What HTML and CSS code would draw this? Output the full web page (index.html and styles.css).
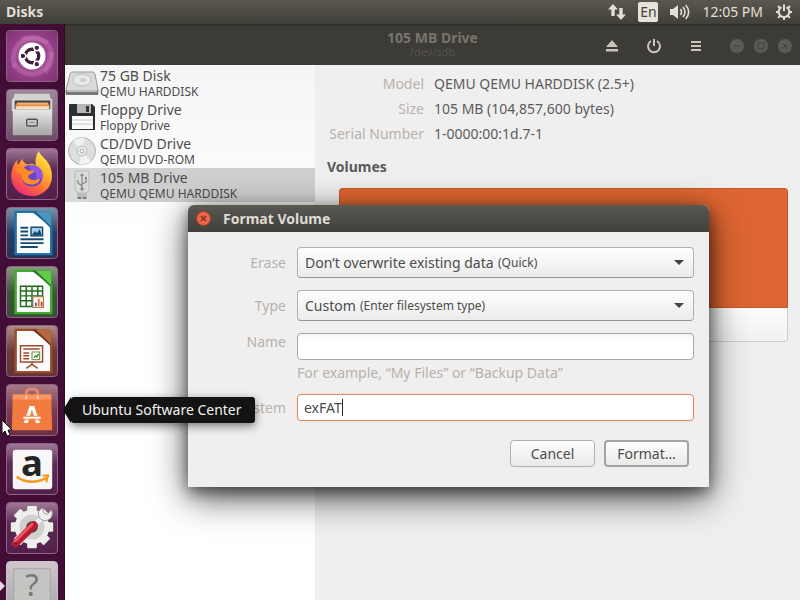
FILE: index.html
```html
<!DOCTYPE html>
<html lang="en">
<head>
<meta charset="utf-8">
<title>Disks</title>
<link rel="stylesheet" href="styles.css">
</head>
<body>
<header class="panel">
  <span class="panel-title">Disks</span>
  <div class="indicators">
    <svg width="18" height="16" viewBox="0 0 18 16" fill="#e4dfd6"><path d="M5 0 0 5.500h3.300V12h3.400V5.500H10zM13 16l-5-5.500h3.300V4h3.400v6.500H18z"/></svg>
    <span class="keyboard">En</span>
    <svg width="20" height="16" viewBox="0 0 20 16" fill="none" stroke="#e4dfd6" stroke-width="1.600"><path d="M0 5h3l5-4v14l-5-4H0z" fill="#e4dfd6" stroke="none"/><path d="M10.500 5q2 3 0 6M13 3q4 5 0 10M15.700 1q6 7 0 14"/></svg>
    <span class="clock">12:05 PM</span>
    <svg width="18" height="18" viewBox="-9 -9 18 18" fill="none" stroke="#e4dfd6" stroke-width="2"><path d="M-2.500-4.800A5.300 5.300 0 1 0 2.500-4.800M0-7.500V-1"/><path d="M5 0h3M-5 0h-3M0 5v3M3.700 3.700l2.200 2.200M-3.700 3.700l-2.200 2.200M4-4l2-2M-4-4l-2-2"/></svg>
  </div>
</header>

<div class="desktop">
  <nav class="launcher" aria-label="Launcher">
    <button class="tile tile-dash" aria-label="Search your computer">
      <svg viewBox="0 0 52 52"><g fill="none" stroke="#d58bc5" stroke-opacity=".3" stroke-width="5"><path d="M8 38C0 12 25 0 42 13"/><path d="M15 9C43-2 56 28 39 43"/><path d="M46 22C45 48 18 52 7 34"/></g><circle cx="26" cy="26" r="14" fill="#fff"/><circle cx="26" cy="26" r="7" fill="none" stroke="#42203d" stroke-width="3.500"/><g stroke="#fff" stroke-width="1.500"><path d="M26 26H13M26 26l7-12M26 26l7 12"/><g fill="#42203d"><circle cx="16.500" cy="26" r="3"/><circle cx="31" cy="17.500" r="3"/><circle cx="31" cy="34.500" r="3"/></g></g><circle cx="26" cy="26" r="5" fill="#fff"/></svg>
    </button>
    <button class="tile tile-files" aria-label="Files">
      <svg viewBox="0 0 52 52"><defs><linearGradient id="cab" x2="0" y2="1"><stop stop-color="#e8e8e6"/><stop offset="1" stop-color="#a6a6a4"/></linearGradient></defs><path d="M8 4h36l2 7H6z" fill="#d2d2d0"/><rect x="5" y="9" width="42" height="13" rx="1" fill="#d8d8d6"/><path d="M8 11h37v10H8z" fill="#44403c"/><path d="M10 13h33v3H10z" fill="#f0b27b"/><path d="M9 15h35v3H9z" fill="#e88c4e"/><path d="M9 17h35v3H9z" fill="#f6dcc0"/><rect x="6" y="20" width="41" height="27" rx="1" fill="url(#cab)"/><rect x="20.500" y="30.500" width="11" height="7" rx="1" fill="#c9c9c7" stroke="#555" stroke-width="1.500"/><path d="M23 34h6" stroke="#888"/></svg>
    </button>
    <button class="tile tile-firefox" aria-label="Firefox">
      <svg viewBox="0 0 52 52"><defs><linearGradient id="fx" x1=".85" y1="0" x2=".2" y2="1"><stop stop-color="#fff04b"/><stop offset=".35" stop-color="#ffb52c"/><stop offset=".65" stop-color="#ff6a3a"/><stop offset="1" stop-color="#e9267a"/></linearGradient></defs><path d="M33 2c1 5 11 9 13 20C50 38 38 49 26 49 11 49 2 37 5 23c1-5 3-9 6-12-1 4 0 5 1 5l4-6c0 3 2 5 5 6 4-1 6-1 9 1-1-5 0-10 3-15z" fill="url(#fx)"/><path d="M17 20c5-6 18-4 20 6 1 8-4 13-11 13-8 0-13-7-9-13z" fill="#6b45c8"/><path d="M22 18c8-4 16 3 15 10-1 3-4 5-7 4 2-4 0-8-4-9z" fill="#9059e0"/><path d="M9 21c3-3 10-2 12 1l7 1c0 3-6 3-6 6 2 4 9 4 11 2 2 0 1 3-1 4-8 5-18 0-17-9-2-2-4-1-6-5z" fill="#ff8b26"/></svg>
    </button>
    <button class="tile tile-writer" aria-label="LibreOffice Writer">
      <svg viewBox="0 0 52 52"><path d="M9 4h21l16 16v28H9z" fill="#fdfdfd" stroke="#2173ab" stroke-width="2.500"/><path d="M26 4h18c2 0 2 1 2 3v13z" fill="#1d608f"/><path d="M30 4h14c2 0 2 1 2 3v12z" fill="#4b94be"/><path d="M14 20.500h8M14 24.500h8M14 28.500h8M14 32.500h24M14 36.500h24M14 40.500h18" stroke="#164b73" stroke-width="2"/><rect x="25" y="20" width="12" height="9" fill="#a5d1e6" stroke="#164b73" stroke-width="1.500"/><path d="m26 28 3-4 2 2 3-4 2 6z" fill="#164b73"/></svg>
    </button>
    <button class="tile tile-calc" aria-label="LibreOffice Calc">
      <svg viewBox="0 0 52 52"><path d="M9 4h21l16 16v28H9z" fill="#fdfdfd" stroke="#3fae2a" stroke-width="2.500"/><path d="M26 4h18c2 0 2 1 2 3v13z" fill="#267326"/><path d="M30 4h14c2 0 2 1 2 3v12z" fill="#62cc49"/><path d="M14 20h23v21H14zM14 25h23M14 30h23M14 35h23M20 20v21M26 20v21M32 20v21" fill="none" stroke="#226b1e" stroke-width="1.500"/><rect x="27" y="31" width="11" height="11" fill="#fff" stroke="#b76a40"/><path d="M29 37h2v4h-2z" fill="#3673b8"/><path d="M32 33h2v8h-2z" fill="#e77435"/><path d="M35 36h2v5h-2z" fill="#b44c35"/></svg>
    </button>
    <button class="tile tile-impress" aria-label="LibreOffice Impress">
      <svg viewBox="0 0 52 52"><path d="M9 4h21l16 16v28H9z" fill="#fdfdfd" stroke="#9c502a" stroke-width="2.500"/><path d="M26 4h18c2 0 2 1 2 3v13z" fill="#71301c"/><path d="M30 4h14c2 0 2 1 2 3v12z" fill="#b9683e"/><path d="M14 20.500h23v17H14zM17 24h17M26 38v2l-6 4M26 40l6 4M17 28h6M17 31h6M17 34h6" fill="none" stroke="#a24a2a" stroke-width="1.500"/><rect x="26" y="27" width="8" height="8" fill="#fff" stroke="#5e8a3a"/><path d="m28 33 2-2 1 1 2-3" fill="none" stroke="#399a39" stroke-width="1.500"/></svg>
    </button>
    <button class="tile tile-software" aria-label="Ubuntu Software Center" aria-describedby="launcher-tip">
      <svg viewBox="0 0 52 52"><path d="M20 14V9q0-5 6-5t6 5v5" fill="none" stroke="#ed8569" stroke-width="3"/><path d="M6 10h40l1 37H5z" fill="#f27b40"/><path d="M6 10h40v5H6z" fill="#fb955e"/><path d="M20 11v4M32 11v4" stroke="#fac3a4" stroke-width="2"/><text x="26" y="40" class="bag-letter">A</text><path d="M16 34h19" stroke="#f27b40" stroke-width="4"/><path d="M17 34h18" stroke="#fff" stroke-width="2"/></svg>
      <span class="tooltip" id="launcher-tip" role="tooltip">Ubuntu Software Center</span>
    </button>
    <button class="tile tile-amazon" aria-label="Amazon">
      <svg viewBox="0 0 52 52"><rect x="6" y="6" width="41" height="41" rx="3" fill="#f7f7f7"/><text x="26" y="33" class="amazon-letter">a</text><path d="M10 34q14 10 32 1" fill="none" stroke="#f49a1b" stroke-width="2.500"/><path d="M37 33q7-1 6 0t-2 7" fill="none" stroke="#f49a1b" stroke-width="2"/></svg>
    </button>
    <button class="tile tile-settings" aria-label="System Settings">
      <svg viewBox="0 0 52 52"><g transform="translate(26 25)"><g fill="#eeeeec"><rect x="-5" y="-22" width="10" height="44" rx="1"/><rect x="-5" y="-22" width="10" height="44" rx="1" transform="rotate(45)"/><rect x="-5" y="-22" width="10" height="44" rx="1" transform="rotate(90)"/><rect x="-5" y="-22" width="10" height="44" rx="1" transform="rotate(135)"/><circle r="18"/></g><circle r="13" fill="#d0d0ce"/><circle r="6" fill="#65343b"/></g><path d="M24 27 37 15" stroke="#eee" stroke-width="5"/><path d="M37 5q-6 3-4 9 4 7 11 3 5-4 2-10l-4 5-4-2z" fill="#eee" stroke="#999"/><path d="M9 42 28 23" stroke="#b71c34" stroke-width="8" stroke-linecap="round"/><path d="M8 40 26 22" stroke="#ef5662" stroke-width="3" stroke-linecap="round"/><circle cx="9" cy="42" r="1.500" fill="#7c1326"/></svg>
    </button>
    <button class="tile tile-unknown" aria-label="Disks">
      <svg viewBox="0 0 52 52"><rect x="7" y="7" width="38" height="44" fill="#c4c4c3" stroke="#a7a7a6"/><text x="26" y="35" class="unknown-mark">?</text></svg>
    </button>
    <svg class="running" width="5" height="10" viewBox="0 0 5 10"><path d="m0 0 5 5-5 5z" fill="#ecd8e5"/></svg>
  </nav>

  <div class="window">
    <header class="headerbar">
      <div class="heading"><h1>105 MB Drive</h1><p>/dev/sdb</p></div>
      <div class="actions">
        <button aria-label="Eject"><svg width="14" height="14" viewBox="0 0 14 14" fill="#c8c5bd"><path d="m7 1 6 7H1zM1 10h12v2.500H1z"/></svg></button>
        <button aria-label="Power off"><svg width="16" height="16" viewBox="0 0 16 16" fill="none" stroke="#c8c5bd" stroke-width="2"><path d="M5 3a6 6 0 1 0 6 0M8 1v7"/></svg></button>
        <button aria-label="Menu"><svg width="12" height="12" viewBox="0 0 12 12" stroke="#c8c5bd" stroke-width="2"><path d="M1 2h10M1 6h10M1 10h10"/></svg></button>
      </div>
      <div class="controls">
        <button aria-label="Minimize"><svg viewBox="0 0 16 16"><circle cx="8" cy="8" r="7.500"/><path d="M5 8h6"/></svg></button>
        <button aria-label="Maximize"><svg viewBox="0 0 16 16"><circle cx="8" cy="8" r="7.500"/><path d="M5 5h6v6H5z"/></svg></button>
        <button aria-label="Close"><svg viewBox="0 0 16 16"><circle cx="8" cy="8" r="7.500"/><path d="m5.500 5.500 5 5M10.500 5.500l-5 5"/></svg></button>
      </div>
    </header>
    <div class="content">
      <ul class="drives">
        <li>
          <svg viewBox="0 0 34 34"><path d="M7 6h21q1 0 2 2l3 16v4H1v-4L5 8q1-2 2-2z" fill="#dadada" stroke="#999"/><path d="M1 24h32v5H1z" fill="#777"/><path d="M2 24h30v2H2z" fill="#bbb"/><ellipse cx="17" cy="14" rx="9" ry="6" fill="#e9e9e9" stroke="#bcbcbc"/><ellipse cx="18" cy="14" rx="3" ry="2" fill="#ccc"/></svg>
          <div><b>75 GB Disk</b><small>QEMU HARDDISK</small></div>
        </li>
        <li>
          <svg viewBox="0 0 34 34"><path d="M5 4h22l3 3v23H5q-1 0-1-1V5q0-1 1-1z" fill="#2d3033"/><path d="M12 4h14v9H12z" fill="#b4b6b7"/><path d="M21 6h3v6h-3z" fill="#333"/><path d="M7 16h21v13H7z" fill="#fafafa"/><path d="M7 20h21M7 24h21" stroke="#ccc"/></svg>
          <div><b>Floppy Drive</b><small>Floppy Drive</small></div>
        </li>
        <li>
          <svg viewBox="0 0 34 34"><circle cx="17" cy="17" r="13.500" fill="#dedede" stroke="#b1b1b1"/><path d="M17 17 8 7q6-5 12-3zM17 17l9 10q-6 5-12 3z" fill="#f1f1f1"/><circle cx="17" cy="17" r="5" fill="#eaeaea" stroke="#bbb"/><circle cx="17" cy="17" r="2" fill="#fff" stroke="#aaa"/></svg>
          <div><b>CD/DVD Drive</b><small>QEMU DVD-ROM</small></div>
        </li>
        <li class="selected">
          <svg viewBox="0 0 34 34"><path d="M10 3h14v17q0 4-3 5h-8q-3-1-3-5z" fill="#dadada" stroke="#bbb"/><path d="M12 25h10v6H12z" fill="#bbb"/><path d="M13 29h3v2h-3zM18 29h3v2h-3z" fill="#777"/><path d="M17 7v14M17 18l-4-3v-3M17 16l4-2v-3" fill="none" stroke="#8a8a8a" stroke-width="1.300"/><path d="m15 8 2-3 2 3zM20 9h2v2h-2z" fill="#8a8a8a"/><circle cx="17" cy="21" r="1.700" fill="#8a8a8a"/></svg>
          <div><b>105 MB Drive</b><small>QEMU QEMU HARDDISK</small></div>
        </li>
      </ul>
      <main class="details">
        <dl>
          <dt>Model</dt><dd>QEMU QEMU HARDDISK (2.5+)</dd>
          <dt>Size</dt><dd>105 MB (104,857,600 bytes)</dd>
          <dt>Serial Number</dt><dd>1-0000:00:1d.7-1</dd>
        </dl>
        <h2>Volumes</h2>
        <div class="volume"><div class="partition"></div><div class="toolbar"></div></div>
      </main>
    </div>
  </div>

  <form class="dialog" role="dialog" aria-labelledby="dialog-title">
    <header class="titlebar">
      <button type="button" class="close" aria-label="Close"><svg width="7" height="7" viewBox="0 0 7 7" stroke="#7c3220" stroke-width="1.500"><path d="m1 1 5 5M6 1 1 6"/></svg></button>
      <h2 id="dialog-title">Format Volume</h2>
    </header>
    <div class="fields">
      <label class="middle" for="erase">Erase</label>
      <div class="combo"><select id="erase"><option>Don’t overwrite existing data</option></select><small>(Quick)</small></div>
      <label class="middle" for="type">Type</label>
      <div class="combo"><select id="type"><option>Custom</option></select><small>(Enter filesystem type)</small></div>
      <label for="name">Name</label>
      <div class="entry"><input id="name" type="text" aria-describedby="name-hint"><p id="name-hint">For example, “My Files” or “Backup Data”</p></div>
      <label class="middle" for="filesystem">Filesystem</label>
      <div class="entry focused"><input id="filesystem" type="text" value="exFAT" size="4"><i class="caret"></i></div>
    </div>
    <footer class="buttons">
      <button type="button">Cancel</button>
      <button type="submit" class="default">Format…</button>
    </footer>
  </form>
  <svg class="pointer" width="12" height="18" viewBox="0 0 12 18"><path d="M1 1v14l3-3 2 5 3-1-2-5h4z" fill="#fff" stroke="#111"/></svg>
</div>
</body>
</html>
```
FILE: styles.css
```css
* { box-sizing: border-box; }
body, h1, h2, p, ul, dl, dd { margin: 0; padding: 0; }
body {
  height: 100vh;
  display: flex;
  flex-direction: column;
  overflow: hidden;
  font: 14px/18px "Noto Sans", "Open Sans", sans-serif;
  color: #4c4c4c;
  background: #f0efef;
}
button, input, select { font: inherit; color: inherit; }
button { cursor: default; }
svg { display: block; flex: none; }
small { font-size: 12px; }

.panel {
  height: 24px;
  flex: none;
  display: flex;
  justify-content: space-between;
  align-items: center;
  padding: 0 7px 0 6px;
  color: #e4dfd6;
  background: linear-gradient(#59574f, #403f39);
}
.panel-title { font-weight: 700; }
.indicators { display: flex; align-items: center; gap: 12px; }
.keyboard {
  width: 20px;
  height: 20px;
  border-radius: 2px;
  background: #e7e2da;
  color: #45433d;
  text-align: center;
  line-height: 20px;
}

.desktop { flex: 1; min-height: 0; display: flex; position: relative; }

.launcher {
  width: 65px;
  flex: none;
  display: flex;
  flex-direction: column;
  gap: 7px;
  padding: 6px;
  background: #420e38;
  border-right: 1px solid #2e0a28;
}
.tile {
  position: relative;
  flex: none;
  width: 52px;
  height: 52px;
  padding: 0;
  border: 1px solid #8e6386;
  border-radius: 4px;
  background: linear-gradient(#9f7896, #5c2a53 40%, #52204a);
}
.tile svg { width: 50px; height: 50px; }
.tile-dash { background: radial-gradient(#b574aa, #963d88 60%, #7d3471); }
.tile-files { background: linear-gradient(#9c8a99, #6c4b67); }
.tile-writer { background: linear-gradient(#7693ab, #273e63 50%, #293153); }
.tile-calc { background: linear-gradient(#879a7c, #3b5737 50%, #3a4d38); }
.tile-impress { background: linear-gradient(#ad8d85, #6f3b36 50%, #633337); }
.tile-software { background: linear-gradient(#a47a83, #7b3c4c 50%, #6b2e43); }
.tile-unknown { background: linear-gradient(#cfc6cd, #a9a6a8); border-color: #cbbfc8; }
.bag-letter, .amazon-letter, .unknown-mark { text-anchor: middle; font-weight: 700; }
.bag-letter { font-size: 24px; fill: #fff; }
.amazon-letter { font-size: 38px; fill: #242424; }
.unknown-mark { font-size: 32px; font-weight: 400; fill: #777; }
.running { position: absolute; left: 0; top: 557px; }

.tooltip {
  position: absolute;
  z-index: 5;
  left: 64px;
  top: 12px;
  height: 26px;
  padding: 0 13px 0 11px;
  border-radius: 3px;
  background: #131313;
  color: #f2f2f2;
  line-height: 26px;
  white-space: nowrap;
  box-shadow: 0 3px 10px rgba(0, 0, 0, .5);
}
.tooltip::before {
  content: "";
  position: absolute;
  right: 100%;
  top: 0;
  border: solid transparent;
  border-width: 13px 8px 13px 0;
  border-right-color: #131313;
}

.window { flex: 1; min-width: 0; display: flex; flex-direction: column; }
.headerbar {
  height: 41px;
  flex: none;
  display: flex;
  justify-content: flex-end;
  align-items: center;
  padding-right: 7px;
  background: #3c3b36;
  border-top: 2px solid #302f2b;
  position: relative;
}
.heading { position: absolute; inset: 4px 0 auto; text-align: center; color: #77756d; }
.heading h1 { font-size: 14px; line-height: 16px; }
.heading p { font-size: 11px; line-height: 12px; color: #55534d; }
.actions, .controls { display: flex; align-items: center; }
.headerbar button { padding: 0; border: 0; background: none; }
.actions { gap: 21px; margin-right: 23px; }
.actions button { width: 21px; display: grid; place-items: center; }
.controls { gap: 8px; }
.controls svg { width: 16px; height: 16px; fill: #5c5a54; stroke: #403f3a; }

.content { flex: 1; display: flex; min-height: 0; }
.drives {
  width: 250px;
  flex: none;
  padding-top: 1px;
  list-style: none;
  background: linear-gradient(#f5f5f5, #fff 170px);
}
.drives li { height: 34px; display: flex; gap: 1px; align-items: center; }
.drives .selected { background: linear-gradient(90deg, #dcdcdc, #d0d0d0 60px); }
.drives svg { width: 34px; height: 34px; }
.drives b, .drives small { display: block; font-weight: 400; }
.drives b { line-height: 18px; }
.drives small { line-height: 14px; }

.details { flex: 1; padding: 6px 12px; }
.details dl {
  display: grid;
  grid-template-columns: 97px 1fr;
  column-gap: 10px;
  line-height: 25px;
  color: #5c5c5c;
}
.details dt { text-align: right; color: #b9b1aa; white-space: nowrap; }
.details h2 { margin: 12px 0; font-size: 14px; line-height: 18px; color: #5a5a5a; }
.volume { margin-left: 12px; border-radius: 3px; overflow: hidden; }
.partition { height: 120px; background: #df6632; border: 1px solid #c4582b; border-radius: 3px 3px 0 0; }
.toolbar {
  height: 34px;
  border: 1px solid #cfcdcb;
  border-top: 0;
  border-radius: 0 0 3px 3px;
  background: linear-gradient(#fdfdfd, #f0f0f0);
}

.dialog {
  position: absolute;
  left: 188px;
  top: 181px;
  width: 521px;
  border-radius: 6px 6px 0 0;
  background: #f0efef;
  box-shadow: 0 10px 36px rgba(0, 0, 0, .7), 0 5px 14px rgba(0, 0, 0, .45);
}
.titlebar {
  height: 27px;
  display: flex;
  align-items: center;
  gap: 12px;
  padding-left: 8px;
  border-radius: 6px 6px 0 0;
  background: linear-gradient(#595852, #403f3a);
  color: #dfdbd2;
}
.titlebar h2 { font-size: 14px; }
.close {
  width: 15px;
  height: 15px;
  display: grid;
  place-items: center;
  padding: 0;
  border: 1px solid #a53c20;
  border-radius: 50%;
  background: #ef6547;
}
.fields {
  display: grid;
  grid-template-columns: 98px 1fr;
  column-gap: 11px;
  row-gap: 12px;
  padding: 15px 15px 0 0;
}
.fields label { text-align: right; color: #b9b1aa; }
.fields .middle { align-self: center; }
.combo {
  height: 31px;
  display: flex;
  align-items: center;
  gap: 4px;
  padding: 0 9px 0 7px;
  border: 1px solid #b2b0ae;
  border-bottom-color: #989694;
  border-radius: 4px;
  background: linear-gradient(#fefefe, #ebebea);
}
.combo::after {
  content: "";
  margin-left: auto;
  border: solid transparent;
  border-width: 5px 5px 0;
  border-top-color: #454545;
}
.combo select { appearance: none; padding: 0; border: 0; background: none; outline: 0; }
.entry input {
  width: 100%;
  height: 27px;
  display: block;
  padding: 0 6px;
  border: 1px solid #a9a7a5;
  border-radius: 4px;
  background: linear-gradient(#f5f5f5, #fff 6px);
  outline: 0;
}
.entry p { margin-top: 4px; color: #b9b1aa; }
.focused {
  height: 27px;
  display: flex;
  align-items: center;
  border: 1px solid #d58a68;
  border-radius: 4px;
  background: #fff;
  box-shadow: 0 0 2px 1px #fbe3d2;
}
.entry.focused input {
  width: auto;
  field-sizing: content;
  height: 25px;
  padding: 0 0 0 6px;
  border: 0;
  background: none;
}
.caret { width: 1px; height: 17px; background: #222; }
.buttons {
  display: flex;
  justify-content: flex-end;
  gap: 9px;
  padding: 19px 20px 20px;
}
.buttons button {
  width: 85px;
  height: 27px;
  padding: 0;
  border: 1px solid #b2b0ae;
  border-radius: 4px;
  background: linear-gradient(#fefefe, #e9e9e8);
}
.buttons .default { border: 2px solid #a5a4a2; }
.pointer { position: absolute; left: 1px; top: 395px; }
```
